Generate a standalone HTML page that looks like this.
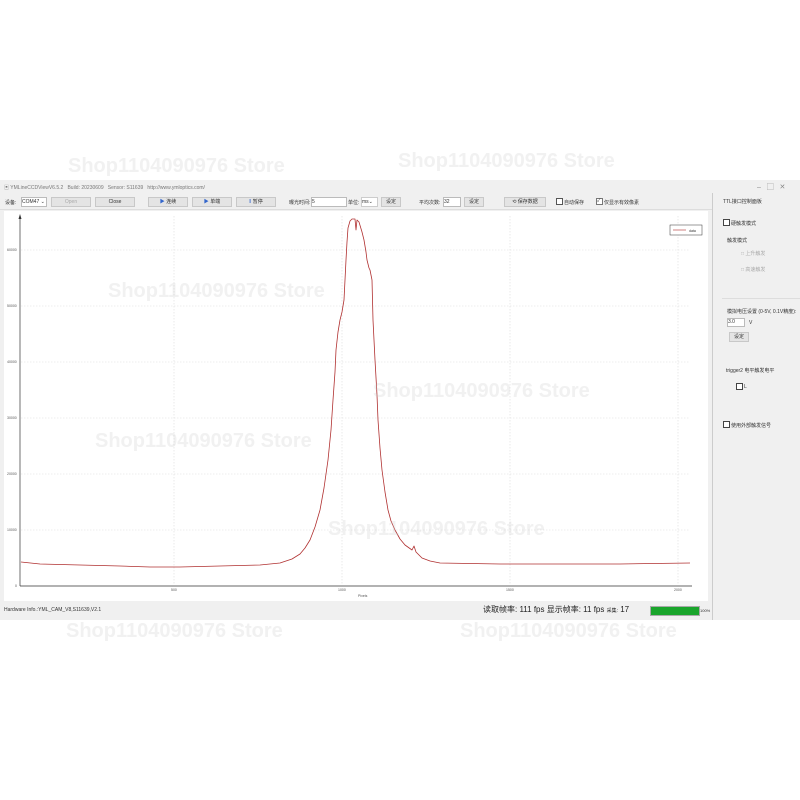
<!DOCTYPE html>
<html><head><meta charset="utf-8"><style>
body{margin:0;width:800px;height:800px;background:#fff;position:relative;overflow:hidden;font-family:"Liberation Sans","Noto Sans CJK SC",sans-serif;font-size:5px;color:#333}
.a{position:absolute}
.btn{position:absolute;background:#e4e4e4;border:1px solid #c8c8c8;font-size:5px;text-align:center;line-height:8px;height:8px}
.wm{position:absolute;color:rgba(200,200,200,0.25);font-size:20px;font-weight:bold;white-space:nowrap}
</style></head><body>
<div class="a" style="left:0;top:180px;width:800px;height:440px;background:#f0f0f0"></div>
<div class="a" style="left:4px;top:184px;font-size:5px;color:#777">▣ YMLineCCDViewV6.5.2 &nbsp; Build: 20230609 &nbsp; Sensor: S11639 &nbsp; http://www.ymloptics.com/</div>
<div class="a" style="left:757px;top:182px;font-size:7px;color:#888">–&nbsp;&nbsp;&nbsp;▢&nbsp;&nbsp;&nbsp;✕</div>
<div class="a" style="left:0;top:193px;width:712px;height:16px;background:#f0f0f0;border-bottom:1px solid #ddd"></div>
<div class="a" style="left:5px;top:199px">设备:</div>
<div class="a" style="left:21px;top:197px;width:24px;height:8px;background:#fff;border:1px solid #bbb;font-size:5px;line-height:8px">COM47 ⌄</div>
<div class="btn" style="left:51px;top:197px;width:38px;color:#aaa">Open</div>
<div class="btn" style="left:95px;top:197px;width:38px">Close</div>
<div class="btn" style="left:148px;top:197px;width:38px"><span style="color:#36c">▶</span> 连续</div>
<div class="btn" style="left:192px;top:197px;width:38px"><span style="color:#36c">▶</span> 单端</div>
<div class="btn" style="left:236px;top:197px;width:38px"><span style="color:#36c">‖</span> 暂停</div>
<div class="a" style="left:289px;top:199px">曝光时间: </div>
<div class="a" style="left:311px;top:197px;width:34px;height:8px;background:#fff;border:1px solid #bbb;line-height:8px">5</div>
<div class="a" style="left:348px;top:199px">单位:</div>
<div class="a" style="left:361px;top:197px;width:15px;height:8px;background:#fff;border:1px solid #ccc;line-height:8px">ms⌄</div>
<div class="btn" style="left:381px;top:197px;width:18px">设定</div>
<div class="a" style="left:419px;top:199px">平均次数:</div>
<div class="a" style="left:443px;top:197px;width:16px;height:8px;background:#fff;border:1px solid #bbb;line-height:8px">32</div>
<div class="btn" style="left:464px;top:197px;width:18px">设定</div>
<div class="btn" style="left:504px;top:197px;width:40px">⟲ 保存数据</div>
<div class="a" style="left:556px;top:198px;width:5px;height:5px;border:1px solid #555;background:#fff"></div>
<div class="a" style="left:564px;top:199px">自动保存</div>
<div class="a" style="left:596px;top:198px;width:5px;height:5px;border:1px solid #777;background:#fff;font-size:5px;line-height:5px">✓</div>
<div class="a" style="left:604px;top:199px">仅显示有效像素</div>
<div class="a" style="left:4px;top:211px;width:704px;height:390px;background:#fff"></div>
<svg class="a" style="left:0;top:0" width="712" height="620">
<g stroke="#ddd" stroke-width="0.6" stroke-dasharray="1.5,1.5">
<line x1="21" y1="250" x2="690" y2="250"/><line x1="21" y1="306" x2="690" y2="306"/><line x1="21" y1="362" x2="690" y2="362"/><line x1="21" y1="418" x2="690" y2="418"/><line x1="21" y1="474" x2="690" y2="474"/><line x1="21" y1="530" x2="690" y2="530"/>
<line x1="174" y1="216" x2="174" y2="585"/><line x1="342" y1="216" x2="342" y2="585"/><line x1="510" y1="216" x2="510" y2="585"/><line x1="678" y1="216" x2="678" y2="585"/>
</g>
<line x1="20" y1="216" x2="20" y2="586" stroke="#333" stroke-width="0.7"/>
<line x1="20" y1="586" x2="692" y2="586" stroke="#333" stroke-width="0.7"/>
<polygon points="20,214 18.5,219 21.5,219" fill="#333"/>
<g font-size="3.5" fill="#555" font-family="Liberation Sans">
<text x="7" y="251">60000</text><text x="7" y="307">50000</text><text x="7" y="363">40000</text><text x="7" y="419">30000</text><text x="7" y="475">20000</text><text x="7" y="531">10000</text><text x="15" y="587">0</text>
<text x="171" y="591">500</text><text x="338" y="591">1000</text><text x="506" y="591">1500</text><text x="674" y="591">2000</text>
<text x="358" y="597">Pixels</text>
</g>
<polyline fill="none" stroke="#b03030" stroke-width="0.8" stroke-linejoin="round" points="21,562 40,564 80,565 120,566 150,567 180,567 220,566 260,565 280,563 292,559 300,554 305,548 310,540 315,527 320,510 324,488 328,460 331,430 333,400 335,372 336,350 338,332 340,320 342,312 344,300 345,280 346,260 347,242 348,228 350,221 352,219 355,219 356,230 357,220 359,222 362,232 364,240 366,252 367,260 369,268 370,270 372,280 373,320 375,360 377,395 378,420 380,448 382,470 385,492 388,510 391,521 395,530 400,539 405,545 412,550 414,546 416,552 422,558 430,561 440,563 500,564 560,564 620,564 690,563"/>
<rect x="670" y="225" width="32" height="10" fill="#fff" stroke="#333" stroke-width="0.5"/>
<line x1="673" y1="230" x2="686" y2="230" stroke="#b03030" stroke-width="0.6"/>
<text x="689" y="232" font-size="3.5" fill="#333">data</text>
</svg>
<div class="a" style="left:712px;top:193px;width:88px;height:427px;background:#f0f0f0;border-left:1px solid #ccc"></div>
<div class="a" style="left:723px;top:198px">TTL接口控制面板</div>
<div class="a" style="left:723px;top:219px;width:5px;height:5px;border:1px solid #444;background:#fff"></div>
<div class="a" style="left:731px;top:220px">硬触发模式</div>
<div class="a" style="left:727px;top:237px">触发模式</div>
<div class="a" style="left:741px;top:250px;color:#aaa">□ 上升触发</div>
<div class="a" style="left:741px;top:266px;color:#aaa">□ 高速触发</div>
<div class="a" style="left:722px;top:298px;width:78px;border-top:1px solid #ddd"></div>
<div class="a" style="left:727px;top:308px">模拟电压设置 (0-5V, 0.1V精度):</div>
<div class="a" style="left:727px;top:318px;width:16px;height:7px;background:#fff;border:1px solid #bbb;line-height:7px">3.0</div>
<div class="a" style="left:749px;top:320px">V</div>
<div class="btn" style="left:729px;top:332px;width:18px">设定</div>
<div class="a" style="left:726px;top:367px">trigger2 电平触发电平</div>
<div class="a" style="left:736px;top:383px;width:5px;height:5px;border:1px solid #444;background:#fff"></div>
<div class="a" style="left:744px;top:384px">L</div>
<div class="a" style="left:723px;top:421px;width:5px;height:5px;border:1px solid #444;background:#fff"></div>
<div class="a" style="left:731px;top:422px">使用外部触发信号</div>
<div class="a" style="left:4px;top:607px;font-size:5px">Hardware Info.:YML_CAM_V8,S11639,V2.1</div>
<div class="a" style="left:483px;top:604px;font-size:8px;color:#222;white-space:nowrap">读取帧率: 111 fps 显示帧率: 11 fps <span style="font-size:5px">采集:</span> 17</div>
<div class="a" style="left:650px;top:606px;width:48px;height:8px;background:#1aa52c;border:1px solid #aaa"></div>
<div class="a" style="left:700px;top:608px;font-size:4px">100%</div>
<div class="wm" style="left:68px;top:155px">Shop1104090976 Store</div>
<div class="wm" style="left:398px;top:150px">Shop1104090976 Store</div>
<div class="wm" style="left:108px;top:280px">Shop1104090976 Store</div>
<div class="wm" style="left:373px;top:380px">Shop1104090976 Store</div>
<div class="wm" style="left:95px;top:430px">Shop1104090976 Store</div>
<div class="wm" style="left:328px;top:518px">Shop1104090976 Store</div>
<div class="wm" style="left:66px;top:620px">Shop1104090976 Store</div>
<div class="wm" style="left:460px;top:620px">Shop1104090976 Store</div>
</body></html>
